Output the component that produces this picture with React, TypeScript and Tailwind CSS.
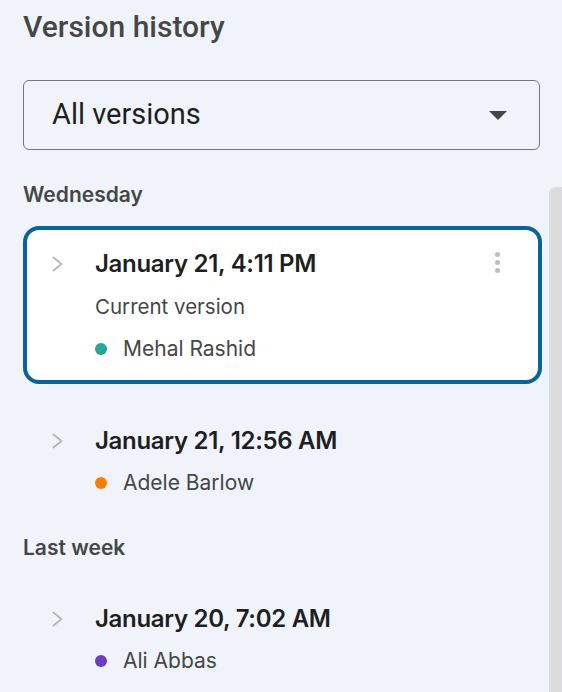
type Version = {
  date: string;
  author: string;
  dot: string;
  current?: boolean;
};

function Chevron() {
  return (
    <svg width="12" height="16" viewBox="0 0 12 16" fill="none">
      <path d="M1.5 1.5L9.5 8L1.5 14.5" stroke="#b6b6b6" strokeWidth="1.9" strokeLinecap="round" strokeLinejoin="round" />
    </svg>
  );
}

function VersionRow({ v }: { v: Version }) {
  return (
    <div className="flex">
      <div className="flex h-7 w-[68px] shrink-0 items-center pl-[25px]">
        <Chevron />
      </div>
      <div className="flex-1">
        <div className="flex h-7 items-center text-[24px] font-semibold tracking-[-0.3px] text-[#1f1f1f]">
          {v.date}
        </div>
        {v.current && (
          <div className="mt-[15px] flex h-7 items-center text-[20.5px] text-[#444746]">
            Current version
          </div>
        )}
        <div className="mt-[14px] flex h-7 items-center gap-[16px] text-[21px] text-[#444746]">
          <span className="h-[12px] w-[12px] rounded-full" style={{ background: v.dot }} />
          {v.author}
        </div>
      </div>
    </div>
  );
}

export default function App() {
  return (
    <div
      className="h-[692px] w-[562px] overflow-hidden bg-[#f0f4fa]"
      style={{ fontFamily: 'Inter, "Noto Sans", sans-serif' }}
    >
      <div
        className="px-[23px] pt-[9px]"
        style={{ fontFamily: 'Roboto, "Liberation Sans", sans-serif' }}
      >
        <h1 className="h-9 text-[30px] font-medium leading-9 text-[#444746]">Version history</h1>
        <button className="mt-[35px] flex h-[70px] w-[517px] items-center justify-between rounded-[6px] border border-[#757575] pl-[28px] pr-[32px]">
          <span className="text-[29px] text-[#1f1f1f]">All versions</span>
          <svg width="18" height="9" viewBox="0 0 18 9">
            <path d="M0 0h18L9 9z" fill="#444746" />
          </svg>
        </button>
      </div>

      <div className="mt-[36px] flex">
        <div className="flex-1 pl-[23px] pr-[7px]">
          <div className="-mt-[3px] flex h-6 items-center text-[21px] font-semibold text-[#444746]">
            Wednesday
          </div>
          <div className="relative mt-[19px] rounded-[16px] border-4 border-[#09629a] bg-white pb-[17px] pt-[20px]">
            <VersionRow
              v={{ date: 'January 21, 4:11 PM', author: 'Mehal Rashid', dot: '#26a69a', current: true }}
            />
            <div className="absolute right-[38px] top-[22px] flex flex-col gap-[3px]">
              <span className="h-[5px] w-[5px] rounded-full bg-[#bdbdbd]" />
              <span className="h-[5px] w-[5px] rounded-full bg-[#bdbdbd]" />
              <span className="h-[5px] w-[5px] rounded-full bg-[#bdbdbd]" />
            </div>
          </div>
          <div className="mt-[43px] pl-[4px]">
            <VersionRow v={{ date: 'January 21, 12:56 AM', author: 'Adele Barlow', dot: '#fb7c00' }} />
          </div>
          <div className="mt-[39px] flex h-6 items-center text-[21px] font-semibold text-[#444746]">
            Last week
          </div>
          <div className="mt-[45px] pl-[4px]">
            <VersionRow v={{ date: 'January 20, 7:02 AM', author: 'Ali Abbas', dot: '#6a3fbf' }} />
          </div>
        </div>
        <div className="mt-[1px] h-[600px] w-[13px] rounded-tl-[6px] bg-[#dcdcdf]" />
      </div>
    </div>
  );
}
